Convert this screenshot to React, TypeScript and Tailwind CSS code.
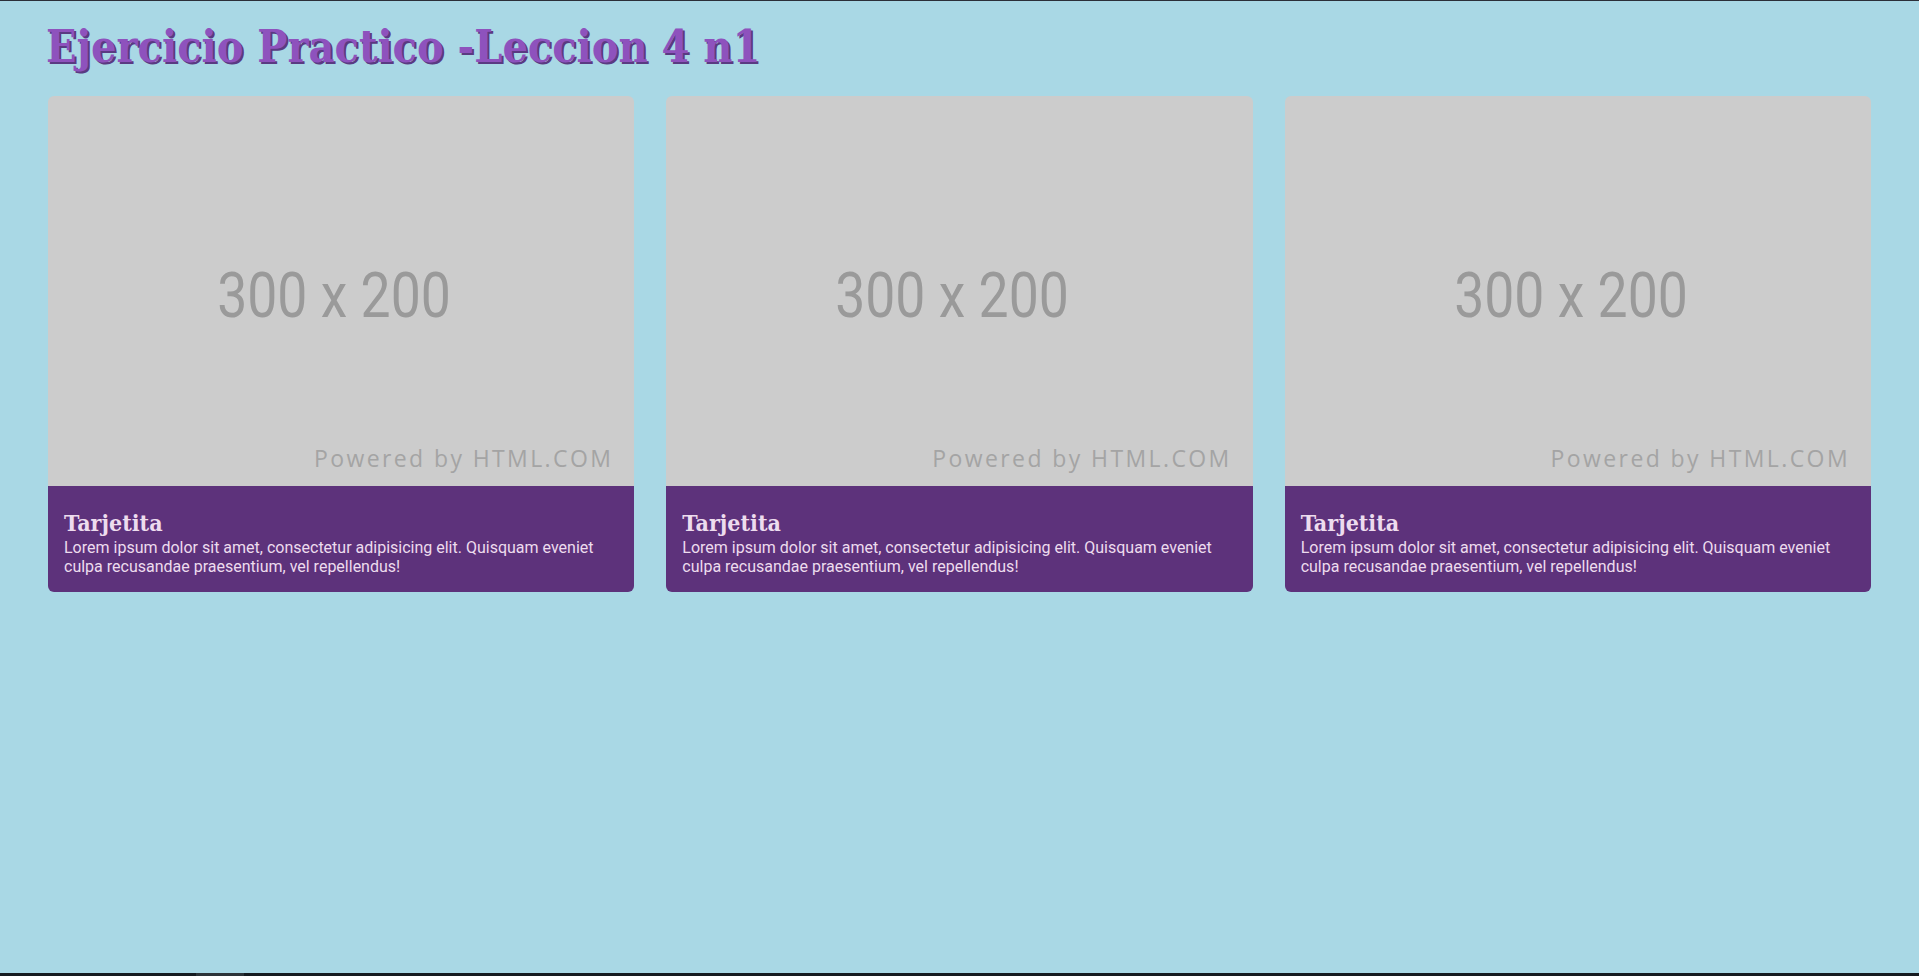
const cards = [1, 2, 3];

const Placeholder = () => (
  <div className="relative aspect-[3/2] w-full bg-[#cccccc] overflow-hidden">
    <div className="absolute left-[48.8%] top-[51%] -translate-x-1/2 -translate-y-1/2">
      <span className="inline-block scale-x-[0.85] font-['Roboto',sans-serif] text-[63px] leading-none text-[#9a9a9a] whitespace-nowrap">
        300 x 200
      </span>
    </div>
    <span className="absolute right-[21px] bottom-[16px] font-['Open_Sans',sans-serif] text-[23px] leading-none tracking-[2.4px] text-[#a4a4a4] whitespace-nowrap">
      Powered by HTML.COM
    </span>
  </div>
);

const Card = () => (
  <div className="rounded-md overflow-hidden flex flex-col">
    <Placeholder />
    <div className="bg-[#5d327b] px-4 pt-[25px] pb-[16px] text-[#eddcee]">
      <h2 className="font-['DejaVu_Serif',serif] [font-stretch:condensed] font-bold text-[23px] leading-none">
        Tarjetita
      </h2>
      <p className="mt-1 font-['Roboto',sans-serif] text-[16px] leading-[19px]">
        Lorem ipsum dolor sit amet, consectetur adipisicing elit. Quisquam eveniet culpa recusandae praesentium, vel repellendus!
      </p>
    </div>
  </div>
);

export default function App() {
  return (
    <div className="h-screen flex flex-col bg-[#a9d8e5] border-t border-[#2b2f38] overflow-hidden">
      <div className="flex-1 px-12 pt-[23px]">
        <h1 className="-ml-[2px] font-['DejaVu_Serif',serif] [font-stretch:condensed] font-bold text-[44.5px] leading-none text-[#8e52bd] [text-shadow:2px_2px_0_#5a3a82]">
          Ejercicio Practico -Leccion 4 n1
        </h1>
        <div className="mt-[27px] grid grid-cols-3 gap-8">
          {cards.map((c) => (
            <Card key={c} />
          ))}
        </div>
      </div>
      <div className="h-[3px] flex bg-[#151b20]">
        <div className="ml-[196px] w-[48px] bg-[#2c3338]" />
      </div>
    </div>
  );
}
